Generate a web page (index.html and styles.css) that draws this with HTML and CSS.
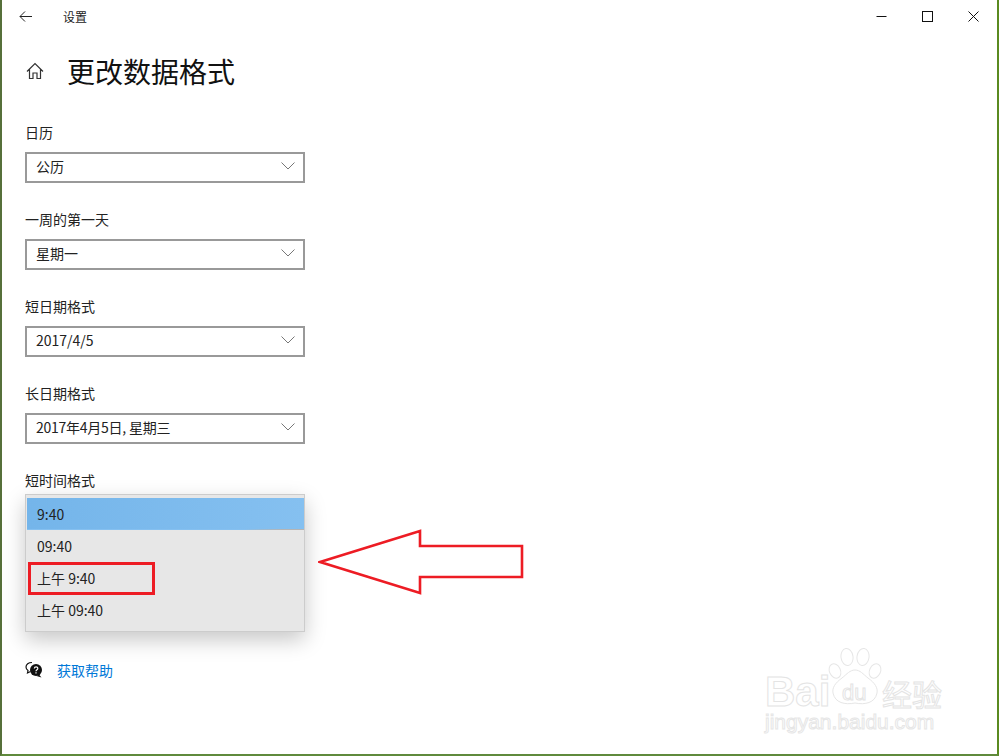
FILE: index.html
```html
<!DOCTYPE html>
<html lang="zh-CN">
<head>
  <meta charset="UTF-8" />
  <title>设置</title>
  <link rel="stylesheet" href="styles.css">
</head>
<body>
  <div class="window">
    <header class="titlebar">
      <svg class="back" viewBox="0 0 13 11" fill="none" stroke="#222" stroke-width="1">
        <path d="M13 5.500H1M6 .5l-5 5 5 5" />
      </svg>
      <span class="app-name">设置</span>
      <div class="win-btns">
        <svg viewBox="0 0 11 11" fill="none" stroke="#111" stroke-width="1"><path d="M.5 5.500h10" /></svg>
        <svg viewBox="0 0 11 11" fill="none" stroke="#111" stroke-width="1"><rect x=".5" y=".5" width="10" height="10" /></svg>
        <svg viewBox="0 0 11 11" fill="none" stroke="#111" stroke-width="1"><path d="M.5.500l10 10M10.500.500l-10 10" /></svg>
      </div>
    </header>

    <main class="content">
      <div class="page-title">
        <svg class="home" viewBox="0 0 18 18" fill="none" stroke="#333" stroke-width="1.2">
          <path d="M1 9.500L9 1.500l8 8M3.500 7.500V16.500H7V11h4v5.500h3.500V7.500" />
        </svg>
        <h1>更改数据格式</h1>
      </div>

      <section class="field">
        <label>日历</label>
        <div class="select"><span>公历</span><svg class="chev" viewBox="0 0 14 8" fill="none" stroke="#777"><path d="M.5.500L7 7l6.500-6.500" /></svg></div>
      </section>
      <section class="field">
        <label>一周的第一天</label>
        <div class="select"><span>星期一</span><svg class="chev" viewBox="0 0 14 8" fill="none" stroke="#777"><path d="M.5.500L7 7l6.500-6.500" /></svg></div>
      </section>
      <section class="field">
        <label>短日期格式</label>
        <div class="select"><span>2017/4/5</span><svg class="chev" viewBox="0 0 14 8" fill="none" stroke="#777"><path d="M.5.500L7 7l6.500-6.500" /></svg></div>
      </section>
      <section class="field">
        <label>长日期格式</label>
        <div class="select"><span class="tight">2017年4月5日, 星期三</span><svg class="chev" viewBox="0 0 14 8" fill="none" stroke="#777"><path d="M.5.500L7 7l6.500-6.500" /></svg></div>
      </section>
      <section class="field">
        <label>短时间格式</label>
        <ul class="dropdown">
          <li class="selected">9:40</li>
          <li>09:40</li>
          <li>上午 9:40</li>
          <li>上午 09:40</li>
        </ul>
      </section>

      <a class="help">
        <svg viewBox="0 0 18 18">
          <path d="M7 1.500C3.500 1.500 1 3.500 1 6c0 1.500.8 2.700 2 3.500L2.500 12l3-1.500" fill="none" stroke="#111" stroke-width="1.200" />
          <circle cx="11" cy="9" r="6" fill="#111" />
          <path d="M14 13.500l2.500 3-5-1.500z" fill="#111" />
          <path d="M9.300 7.500c.2-2.200 3.500-2.200 3.500-.1 0 1.400-1.800 1.400-1.800 2.900M11 11.300v1.200" fill="none" stroke="#fff" stroke-width="1.200" />
        </svg>
        <span>获取帮助</span>
      </a>
    </main>

    <div class="mark-box"></div>
    <svg class="arrow" viewBox="0 0 208 66" fill="none" stroke="#ed1c24" stroke-width="2.600">
      <path d="M2 33L102 2V17H204V48H102V64Z" />
    </svg>

    <div class="watermark">
      <svg class="paw" viewBox="0 0 54 60" fill="#fff" stroke="#e6e6e6" stroke-width="1">
        <ellipse cx="7" cy="23" rx="5.500" ry="7.500" transform="rotate(-25 7 23)" />
        <ellipse cx="19" cy="9" rx="6" ry="8.500" transform="rotate(-8 19 9)" />
        <ellipse cx="35" cy="9" rx="6" ry="8.500" transform="rotate(8 35 9)" />
        <ellipse cx="47" cy="23" rx="5.500" ry="7.500" transform="rotate(25 47 23)" />
        <path d="M27 22c5 0 8 4 13 8 7 5 10 10 9 15-2 10-12 12-22 10-10 2-20 0-22-10-1-5 2-10 9-15 5-4 8-8 13-8z" />
      </svg>
      <div class="mark-main"><span class="bai">Bai</span><span class="du">du</span><span class="jy">经验</span></div>
      <div class="mark-url">jingyan.baidu.com</div>
    </div>
  </div>
</body>
</html>
```

FILE: styles.css
```css
* {
  margin: 0;
  padding: 0;
  box-sizing: border-box;
}
html, body {
  height: 100%;
  overflow: hidden;
}
body {
  font-family: "Noto Sans CJK SC", "Noto Sans", sans-serif;
  background: #fff;
  color: #111;
}
.window {
  position: relative;
  height: 756px;
  border-left: 2px solid #56703a;
  border-right: 2px solid #5a8a20;
  border-bottom: 2px solid #5f8a3c;
  background: #fff;
}
.titlebar {
  height: 32px;
  display: flex;
  align-items: center;
  font-size: 12px;
}
.back {
  width: 13px;
  height: 11px;
  margin-left: 17px;
}
.app-name {
  margin-left: 31px;
  color: #222;
}
.win-btns {
  margin-left: auto;
  margin-right: 18px;
  display: flex;
  gap: 35px;
}
.win-btns svg {
  width: 11px;
  height: 11px;
}
.content {
  padding-left: 23px;
}
.page-title {
  display: flex;
  align-items: center;
  height: 48px;
  margin-top: 15px;
  margin-bottom: 29px;
}
.home {
  width: 18px;
  height: 18px;
  margin-left: 1px;
}
.page-title h1 {
  font-size: 28px;
  font-weight: 400;
  margin-left: 23px;
  line-height: 48px;
  color: #111;
}
.field {
  height: 87px;
}
.field label {
  display: block;
  height: 28px;
  font-size: 14px;
  line-height: 16px;
  color: #222;
}
.select {
  width: 280px;
  height: 31px;
  border: 2px solid #999;
  display: flex;
  align-items: center;
  justify-content: space-between;
  padding: 0 8px 4px 9px;
  font-size: 14px;
  color: #222;
}
.tight {
  letter-spacing: -0.25px;
}
.chev {
  width: 14px;
  height: 8px;
}
.dropdown {
  list-style: none;
  width: 280px;
  height: 138px;
  margin-top: -6px;
  padding-top: 3px;
  position: relative;
  background: #e7e7e7;
  border: 1px solid #ccc;
  box-shadow: 0 8px 20px rgba(0, 0, 0, 0.22);
}
.dropdown li {
  height: 32px;
  line-height: 32px;
  padding-left: 11px;
  font-size: 14px;
  color: #222;
}
.dropdown li.selected {
  background: linear-gradient(90deg, #74b5ea, #85c0f0);
  margin-left: 1px;
  padding-left: 10px;
  border-bottom: 1px solid;
  border-image: linear-gradient(90deg, #85c0f0 78%, #b5b5b5 92%) 1;
}
.help {
  display: flex;
  align-items: center;
  margin-top: 101px;
  font-size: 14px;
  color: #0078d7;
}
.help svg {
  width: 18px;
  height: 18px;
}
.help span {
  margin-left: 14px;
}
.mark-box {
  position: absolute;
  left: 26px;
  top: 562px;
  width: 127px;
  height: 33px;
  border: 3px solid #ed1c24;
}
.arrow {
  position: absolute;
  left: 316px;
  top: 529px;
  width: 208px;
  height: 66px;
}
.watermark {
  position: absolute;
  left: 763px;
  top: 648px;
  width: 180px;
  height: 90px;
  font-family: "Liberation Sans", sans-serif;
}
.paw {
  position: absolute;
  left: 63px;
  top: 0;
  width: 54px;
  height: 60px;
}
.mark-main {
  position: absolute;
  top: 23px;
  left: 0;
  white-space: nowrap;
  display: flex;
  align-items: baseline;
  line-height: 1;
  color: #fff;
  -webkit-text-stroke: 1px #e4e4e4;
}
.bai {
  font-size: 42px;
  font-weight: 700;
  width: 77px;
}
.du {
  font-size: 22px;
  width: 40px;
  position: relative;
  top: -6px;
}
.jy {
  font-family: "Noto Sans CJK SC", sans-serif;
  font-size: 30px;
  white-space: nowrap;
}
.mark-url {
  position: absolute;
  top: 65px;
  left: 0;
  font-size: 21px;
  line-height: 18px;
  color: #fff;
  -webkit-text-stroke: 1px #e6e6e6;
  white-space: nowrap;
}
```
